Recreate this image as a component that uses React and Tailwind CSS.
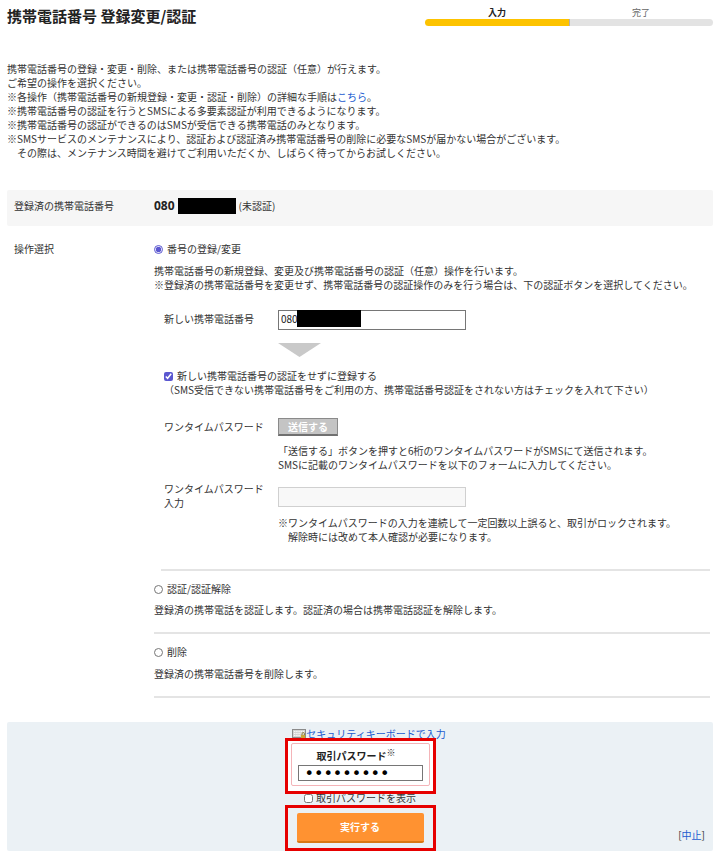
import React, { useState } from 'react';

const StepBar = () => (
  <ol className="flex w-72 shrink-0 text-center text-[9px] leading-[13px]">
    <li className="flex-1 font-bold text-[#222]">
      入力
      <div className="h-[7px] rounded-l-full bg-[#fdc300]" />
    </li>
    <li className="flex-1 text-[#666]">
      完了
      <div className="h-[7px] rounded-r-full border-l border-[#b0b0b0] bg-[#e3e3e3]" />
    </li>
  </ol>
);

const OperationRadio = ({ value, label, selected, onSelect }) => (
  <label className="flex items-center gap-1">
    <input
      type="radio"
      name="operation"
      value={value}
      checked={selected === value}
      onChange={() => onSelect(value)}
      className="size-[9px] accent-[#5b57d0]"
    />
    {label}
  </label>
);

const KeyboardIcon = () => (
  <svg width="14" height="12" viewBox="0 0 14 12" aria-hidden="true">
    <rect x="0.5" y="1.5" width="13" height="8" fill="#d4d4d4" stroke="#8b8b8b" />
    <path d="M2 3.5h10M2 5.5h10M2 7.5h6" stroke="#f7f7f7" strokeDasharray="1.4 0.8" />
    <rect x="9" y="7" width="4" height="4" fill="#c9a63a" />
    <path d="M10 7V5.8a1.2 1.2 0 0 1 2.4 0V7" fill="none" stroke="#8a7a3a" />
  </svg>
);

const App = () => {
  const [operation, setOperation] = useState('change');
  const [phone, setPhone] = useState('080');
  const [skipAuth, setSkipAuth] = useState(true);
  const [password, setPassword] = useState('password1');
  const [showPassword, setShowPassword] = useState(false);

  return (
    <div className="bg-white px-[7px] pb-[3px] font-['Noto_Sans_CJK_JP',sans-serif] text-[10px] leading-[14px] text-[#333]">
      {/* Header */}
      <header className="flex justify-between pt-[6px] pb-9">
        <h1 className="text-[15px] leading-5 font-bold text-[#222]">携帯電話番号 登録変更/認証</h1>
        <StepBar />
      </header>

      <div className="pb-[30px]">
        <p>携帯電話番号の登録・変更・削除、または携帯電話番号の認証（任意）が行えます。</p>
        <p>ご希望の操作を選択ください。</p>
        <p>※各操作（携帯電話番号の新規登録・変更・認証・削除）の詳細な手順は<a href="#guide" className="text-[#1a5bd0]">こちら</a>。</p>
        <p>※携帯電話番号の認証を行うとSMSによる多要素認証が利用できるようになります。</p>
        <p>※携帯電話番号の認証ができるのはSMSが受信できる携帯電話のみとなります。</p>
        <p>※SMSサービスのメンテナンスにより、認証および認証済み携帯電話番号の削除に必要なSMSが届かない場合がございます。</p>
        <p>　その際は、メンテナンス時間を避けてご利用いただくか、しばらく待ってからお試しください。</p>
      </div>

      <form onSubmit={e => e.preventDefault()}>
        {/* Registered number */}
        <div className="flex items-center rounded-xs bg-[#f6f6f6] pt-2 pb-3 pl-[7px]">
          <div className="w-[140px] shrink-0">登録済の携帯電話番号</div>
          <div className="flex items-center gap-[3px]">
            <span className="font-['Open_Sans',sans-serif] text-xs leading-4 font-bold text-[#222]">080</span>
            <span className="h-4 w-[58px] bg-black" />
            <span>(未認証)</span>
          </div>
        </div>

        {/* Operation */}
        <div className="flex pt-4 pl-[7px]">
          <div className="w-[140px] shrink-0">操作選択</div>
          <div className="flex-1 pr-[3px]">
            <OperationRadio value="change" label="番号の登録/変更" selected={operation} onSelect={setOperation} />
            <p className="mt-2">携帯電話番号の新規登録、変更及び携帯電話番号の認証（任意）操作を行います。</p>
            <p className="whitespace-nowrap">※登録済の携帯電話番号を変更せず、携帯電話番号の認証操作のみを行う場合は、下の認証ボタンを選択してください。</p>

            <div className="mt-[18px] flex pl-[10px]">
              <label htmlFor="phone" className="w-[114px] shrink-0 pt-[2px]">新しい携帯電話番号</label>
              <div className="relative">
                <input
                  id="phone"
                  type="tel"
                  value={phone}
                  onChange={e => setPhone(e.target.value)}
                  className="block h-5 w-[188px] border border-[#767676] bg-white px-[2px] pb-[3px] text-[#222]"
                />
                <span className="absolute top-0 left-[19px] h-[17px] w-16 bg-black" />
              </div>
            </div>
            <svg className="mt-[13px] ml-[124px] block" width="43" height="14" viewBox="0 0 43 14" aria-hidden="true">
              <path d="M0 0h43L21.500 14z" fill="#c9c9c9" />
            </svg>

            <div className="mt-3 pl-[10px]">
              <label className="flex items-center gap-1">
                <input
                  type="checkbox"
                  checked={skipAuth}
                  onChange={e => setSkipAuth(e.target.checked)}
                  className="size-[9px] accent-[#5b57d0]"
                />
                新しい携帯電話番号の認証をせずに登録する
              </label>
              <p>（SMS受信できない携帯電話番号をご利用の方、携帯電話番号認証をされない方はチェックを入れて下さい）</p>
            </div>

            <div className="mt-[21px] flex pl-[10px]">
              <div className="w-[114px] shrink-0 pt-[2px]">ワンタイムパスワード</div>
              <div>
                <button
                  type="button"
                  className="block h-[18px] w-[60px] border border-b-2 border-[#8a8a8a] border-b-[#707070] bg-[#c4c4c4] leading-[14px] font-bold text-white"
                >
                  送信する
                </button>
                <p className="mt-2">「送信する」ボタンを押すと6桁のワンタイムパスワードがSMSにて送信されます。</p>
                <p>SMSに記載のワンタイムパスワードを以下のフォームに入力してください。</p>
              </div>
            </div>

            <div className="mt-[10px] flex pl-[10px]">
              <label htmlFor="otp" className="w-[114px] shrink-0">ワンタイムパスワード<br />入力</label>
              <div className="pt-[5px]">
                <input id="otp" type="text" disabled className="block h-5 w-[188px] border border-[#d0d0d0] bg-[#f8f8f8] px-[2px]" />
                <p className="mt-[9px]">※ワンタイムパスワードの入力を連続して一定回数以上誤ると、取引がロックされます。</p>
                <p>　解除時には改めて本人確認が必要になります。</p>
              </div>
            </div>

            <hr className="mt-[25px] ml-[7px] border-t-2 border-[#e4e4e4]" />

            <div className="border-b-2 border-[#e4e4e4] pt-[11px] pb-[15px]">
              <OperationRadio value="auth" label="認証/認証解除" selected={operation} onSelect={setOperation} />
              <p className="mt-[7px]">登録済の携帯電話を認証します。認証済の場合は携帯電話認証を解除します。</p>
            </div>
            <div className="border-b-2 border-[#e4e4e4] pt-[11px] pb-[15px]">
              <OperationRadio value="delete" label="削除" selected={operation} onSelect={setOperation} />
              <p className="mt-2">登録済の携帯電話番号を削除します。</p>
            </div>
          </div>
        </div>

        {/* Submit area */}
        <div className="relative mt-6 flex flex-col items-center rounded-xs bg-[#ebf1f5] pt-[5px]">
          <a href="#keyboard" className="flex items-center pl-[18px] text-[#1a5bd0]">
            <KeyboardIcon />
            セキュリティキーボードで入力
          </a>
          <div className="relative -mt-[3px] w-[151px] border-3 border-[#e60000] bg-white px-[3px] pt-[2px] pb-[5px]">
            <div className="rounded-xs border border-[#f4b4b8] px-[6px] pt-[5px] pb-1">
              <label htmlFor="password" className="block pr-2 text-center font-bold text-[#222]">
                取引パスワード<sup className="text-[9px] font-normal">※</sup>
              </label>
              <input
                id="password"
                type={showPassword ? 'text' : 'password'}
                value={password}
                onChange={e => setPassword(e.target.value)}
                className="mt-[2px] block h-4 w-full border border-[#767676] bg-white px-[6px] font-['DejaVu_Sans',sans-serif] text-base leading-[14px] text-black"
              />
            </div>
          </div>
          <label className="-mt-[3px] flex items-center gap-[3px]">
            <input
              type="checkbox"
              checked={showPassword}
              onChange={e => setShowPassword(e.target.checked)}
              className="size-[9px] accent-[#5b57d0]"
            />
            取引パスワードを表示
          </label>
          <div className="w-[151px] border-3 border-[#e60000] px-[9px] py-[5px]">
            <button
              type="submit"
              className="block h-[30px] w-full rounded-xs border-b-2 border-[#d97714] bg-[#ff9231] font-bold text-white"
            >
              実行する
            </button>
          </div>
          <div className="absolute right-2 bottom-[9px]">
            [<a href="#cancel" className="text-[#1a5bd0]">中止</a>]
          </div>
        </div>
      </form>
    </div>
  );
};

export default App;
